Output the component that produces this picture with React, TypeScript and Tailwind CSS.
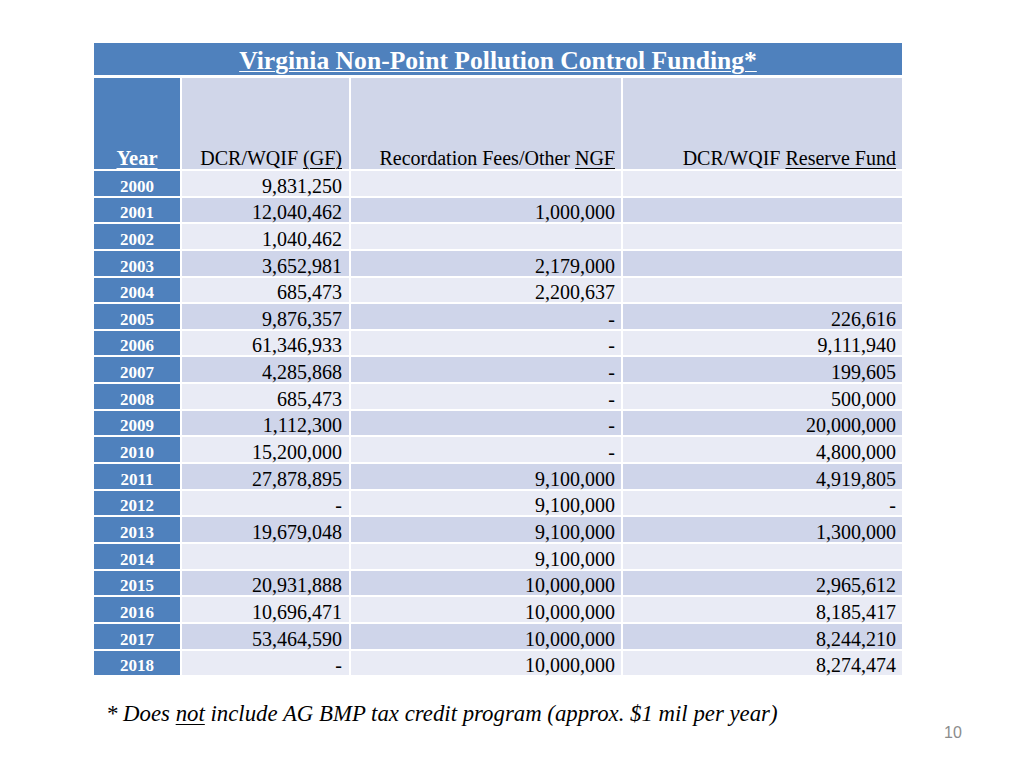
import React from "react";

const rows: [string, string, string, string][] = [
  ["2000", "9,831,250", "", ""],
  ["2001", "12,040,462", "1,000,000", ""],
  ["2002", "1,040,462", "", ""],
  ["2003", "3,652,981", "2,179,000", ""],
  ["2004", "685,473", "2,200,637", ""],
  ["2005", "9,876,357", "-", "226,616"],
  ["2006", "61,346,933", "-", "9,111,940"],
  ["2007", "4,285,868", "-", "199,605"],
  ["2008", "685,473", "-", "500,000"],
  ["2009", "1,112,300", "-", "20,000,000"],
  ["2010", "15,200,000", "-", "4,800,000"],
  ["2011", "27,878,895", "9,100,000", "4,919,805"],
  ["2012", "-", "9,100,000", "-"],
  ["2013", "19,679,048", "9,100,000", "1,300,000"],
  ["2014", "", "9,100,000", ""],
  ["2015", "20,931,888", "10,000,000", "2,965,612"],
  ["2016", "10,696,471", "10,000,000", "8,185,417"],
  ["2017", "53,464,590", "10,000,000", "8,244,210"],
  ["2018", "-", "10,000,000", "8,274,474"],
];

export default function App() {
  return (
    <div
      className="w-[1024px] h-[768px] bg-white relative overflow-hidden text-black"
      style={{ fontFamily: '"Liberation Serif", "Times New Roman", serif' }}
    >
      <div className="pt-[43px] pl-[94px]">
        <div className="w-[808px] flex flex-col">
          <div className="h-[32px] bg-[#4f81bd] flex items-center justify-center">
            <span className="text-white font-bold text-[25.6px] leading-[30px] mt-[3px] underline underline-offset-[2px] decoration-1">
              Virginia Non-Point Pollution Control Funding*
            </span>
          </div>
          <div className="h-[3px]" />
          <div className="grid grid-cols-[86px_167px_270px_279px] gap-x-[2px] gap-y-[2px]">
            <div className="h-[91px] bg-[#4f81bd] flex items-end justify-center">
              <span className="text-white font-bold text-[20.5px] leading-[22px] underline underline-offset-[3px] decoration-1">
                Year
              </span>
            </div>
            <div className="h-[91px] bg-[#d0d6e9] flex items-end justify-end pr-[7px] text-[20px] leading-[22px]">
              <span>
                DCR/WQIF <span className="underline underline-offset-[3px] decoration-1">(GF)</span>
              </span>
            </div>
            <div className="h-[91px] bg-[#d0d6e9] flex items-end justify-end pr-[6px] text-[20px] leading-[22px]">
              <span>
                Recordation Fees/Other{" "}
                <span className="underline underline-offset-[3px] decoration-1">NGF</span>
              </span>
            </div>
            <div className="h-[91px] bg-[#d0d6e9] flex items-end justify-end pr-[6px] text-[20px] leading-[22px]">
              <span>
                DCR/WQIF{" "}
                <span className="underline underline-offset-[3px] decoration-1">Reserve Fund</span>
              </span>
            </div>
            {rows.map((r, i) => {
              const bg = i % 2 === 0 ? "bg-[#e9ebf5]" : "bg-[#cfd5ea]";
              return (
                <React.Fragment key={r[0]}>
                  <div className="h-[24.65px] bg-[#4f81bd] flex items-end justify-center">
                    <span className="text-white font-bold text-[17px] leading-[19px]">{r[0]}</span>
                  </div>
                  <div className={`h-[24.65px] ${bg} flex items-end justify-end pr-[7px] text-[20px] leading-[20px]`}>
                    {r[1]}
                  </div>
                  <div className={`h-[24.65px] ${bg} flex items-end justify-end pr-[6px] text-[20px] leading-[20px]`}>
                    {r[2]}
                  </div>
                  <div className={`h-[24.65px] ${bg} flex items-end justify-end pr-[6px] text-[20px] leading-[20px]`}>
                    {r[3]}
                  </div>
                </React.Fragment>
              );
            })}
          </div>
        </div>
      </div>
      <div className="pl-[106px] pt-[25px] italic text-[22.8px] leading-[28px]">
        * Does <span className="underline underline-offset-[3px] decoration-1">not</span> include AG BMP tax credit program (approx. $1 mil per year)
      </div>
      <div
        className="absolute left-[944px] top-[723px] text-[16px] leading-[20px] text-[#8c8c8c]"
        style={{ fontFamily: '"Liberation Sans", Arial, sans-serif' }}
      >
        10
      </div>
    </div>
  );
}
